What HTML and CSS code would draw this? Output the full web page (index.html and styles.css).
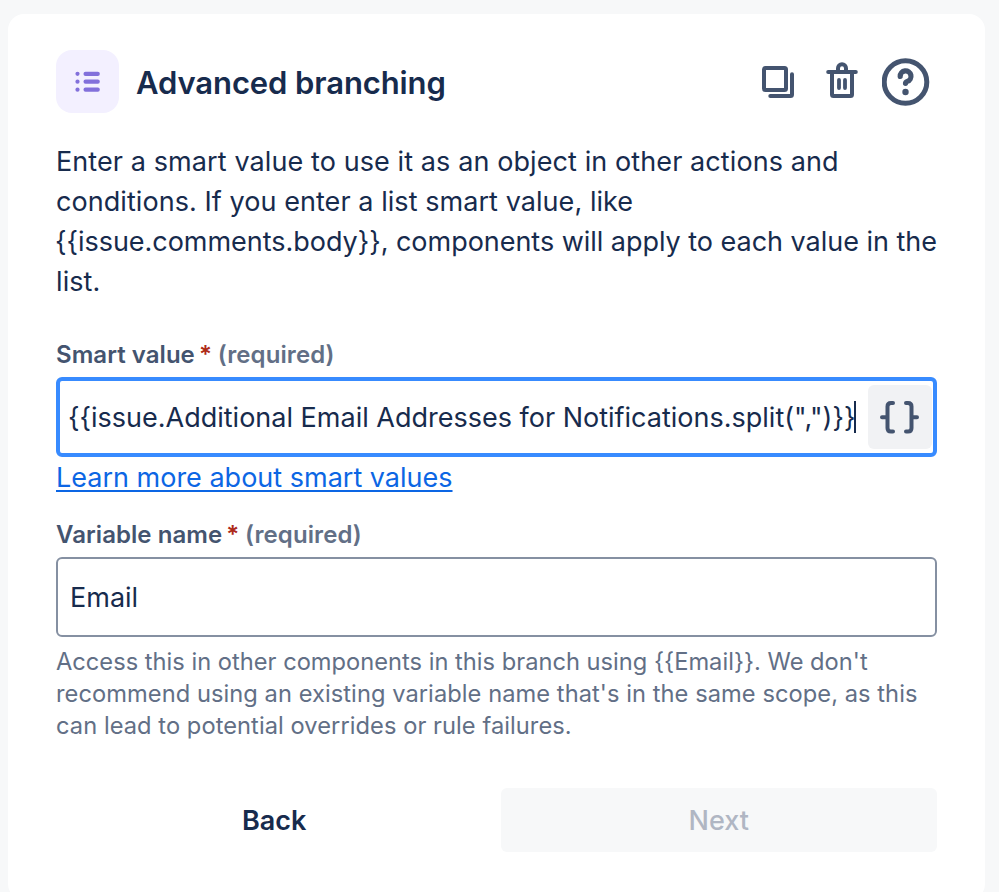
FILE: index.html
```html
<!DOCTYPE html>
<html lang="en">
<head>
<meta charset="utf-8">
<title>Advanced branching</title>
<link rel="stylesheet" href="styles.css">
</head>
<body>
<main class="card">
  <header class="header">
    <span class="badge">
      <svg width="63" height="63" viewBox="0 0 63 63" fill="#8270db">
        <circle cx="21.500" cy="23.800" r="2.100"/><circle cx="21.500" cy="31.700" r="2.100"/><circle cx="21.500" cy="39.700" r="2.100"/>
        <rect x="27.500" y="21.700" width="16.300" height="4.200" rx="2"/><rect x="27.500" y="29.600" width="16.300" height="4.200" rx="2"/><rect x="27.500" y="37.600" width="16.300" height="4.200" rx="2"/>
      </svg>
    </span>
    <h1 class="title">Advanced branching</h1>
    <div class="actions">
      <svg width="48" height="48" viewBox="0 0 48 48" fill="none" stroke="#44546f" stroke-width="4" stroke-linecap="round" stroke-linejoin="round">
        <rect x="10" y="10" width="22" height="22" rx="1.500"/><path d="M38 16.300V36.500a1.500 1.500 0 0 1-1.500 1.500H16.300"/>
      </svg>
      <svg width="48" height="48" viewBox="0 0 48 48" fill="none" stroke="#44546f" stroke-width="4" stroke-linecap="round" stroke-linejoin="round">
        <path d="M10.200 14H37.800M14 14v22.500a1.500 1.500 0 0 0 1.500 1.500h17a1.500 1.500 0 0 0 1.500-1.500V14"/><path d="M20 13V10.200a4 4 0 0 1 8 0V13"/><path d="M21 22v8M27 22v8" stroke-width="3.800"/>
      </svg>
      <svg width="48" height="48" viewBox="0 0 48 48" fill="none" stroke="#44546f" stroke-linecap="round" stroke-linejoin="round">
        <circle cx="23.500" cy="24" r="21.300" stroke-width="5"/><path d="M18.200 18.400A5.400 5.400 0 1 1 25.300 23.400Q23.500 24 23.500 25.300" stroke-width="5.200"/><circle cx="23.500" cy="34" r="3.200" fill="#44546f" stroke="none"/>
      </svg>
    </div>
  </header>
  <p class="intro"><span class="l1">Enter a smart value to use it as an object in other actions and</span><br><span class="l2">conditions. If you enter a list smart value, like</span><br><span class="l3">{{issue.comments.body}}, components will apply to each value in the</span><br><span class="l1">list.</span></p>
  <div class="label"><span>Smart value</span><span class="star">*</span><span class="req">(required)</span></div>
  <div class="field focused">
    <span class="value">{{issue.Additional Email Addresses for Notifications.split(",")}}</span><span class="caret"></span>
    <span class="braces">
      <svg width="64" height="64" viewBox="0 0 64 64" fill="none" stroke="#44546f" stroke-width="4" stroke-linecap="round" stroke-linejoin="round">
        <path d="M25 18H23Q19.500 18 19.500 21.500V43Q19.500 46.500 23 46.500H25M14 32.200H19.500M38 18H40Q43.500 18 43.500 21.500V43Q43.500 46.500 40 46.500H38M43.500 32.200H49"/>
      </svg>
    </span>
  </div>
  <a class="link">Learn more about smart values</a>
  <div class="label second"><span>Variable name</span><span class="star">*</span><span class="req">(required)</span></div>
  <div class="field plain"><span class="email">Email</span></div>
  <p class="help"><span class="h1">Access this in other components in this branch using {{Email}}. We don't</span><br><span>recommend using an existing variable name that's in the same scope, as this</span><br><span>can lead to potential overrides or rule failures.</span></p>
  <footer class="footer"><button class="btn">Back</button><button class="btn next" disabled>Next</button></footer>
</main>
</body>
</html>
```
FILE: styles.css
```css
* { box-sizing: border-box; }
html, body { margin: 0; height: 892px; overflow: hidden; background: #f7f8f9; }
body { padding: 14px 14px 0 8px; font-family: Inter, "Liberation Sans", sans-serif; color: #172b4d; }
.card { height: 886px; padding: 36px 48px 0; border-radius: 16px; background: #fff; }
svg { display: block; }
.header { display: flex; align-items: center; height: 64px; }
.badge { align-self: flex-start; width: 63px; height: 63px; border-radius: 16px; background: #f3f0ff; }
.title { margin: 1px 0 0 17px; font-size: 31px; font-weight: 600; line-height: 40px; letter-spacing: -0.100px; white-space: nowrap; }
.actions { display: flex; gap: 16px; margin: 0 7px 0 auto; }
.intro { margin: 28px 0 0; font-size: 27px; line-height: 40px; white-space: nowrap; }
.l1 { letter-spacing: 0.095px; }
.l2 { letter-spacing: 0.060px; }
.l3 { margin-left: -1px; letter-spacing: -0.030px; }
.label { display: flex; margin-top: 37px; height: 32px; line-height: 32px; font-size: 24px; font-weight: 600; color: #44546f; white-space: nowrap; }
.label span:first-child { letter-spacing: 0.050px; }
.star { margin: 0 6px 0 4px; color: #ae2a19; }
.req { color: #626f86; letter-spacing: 0.100px; }
.field { display: flex; align-items: center; height: 80px; margin-top: 6px; border-radius: 6px; white-space: nowrap; font-size: 27px; }
.focused { border: 4px solid #388bff; padding: 0 1px 0 8px; }
.caret { width: 2px; height: 32px; background: #172b4d; margin-left: -1px; }
.braces { width: 64px; height: 64px; margin-left: auto; border-radius: 6px; background: #f1f2f4; }
.plain { border: 2px solid #8590a2; padding-left: 12px; }
.link { display: block; width: max-content; margin-top: 1px; line-height: 40px; font-size: 27px; color: #0c66e4; text-decoration: underline; text-decoration-thickness: 2px; text-underline-offset: 3px; white-space: nowrap; }
.label.second { margin-top: 21px; }
.help { margin: 9px 0 0; font-size: 23.650px; line-height: 32px; letter-spacing: 0.065px; color: #626f86; white-space: nowrap; }
.h1 { letter-spacing: 0.015px; }
.footer { display: grid; grid-template-columns: 1fr 1fr; gap: 8px; margin-top: 46px; }
.btn { height: 64px; padding: 0; border: 0; border-radius: 6px; background: transparent; font: 600 27px Inter, sans-serif; color: #172b4d; }
.next { background: #f7f8f9; color: #b0b6c3; font-weight: 500; }
```
